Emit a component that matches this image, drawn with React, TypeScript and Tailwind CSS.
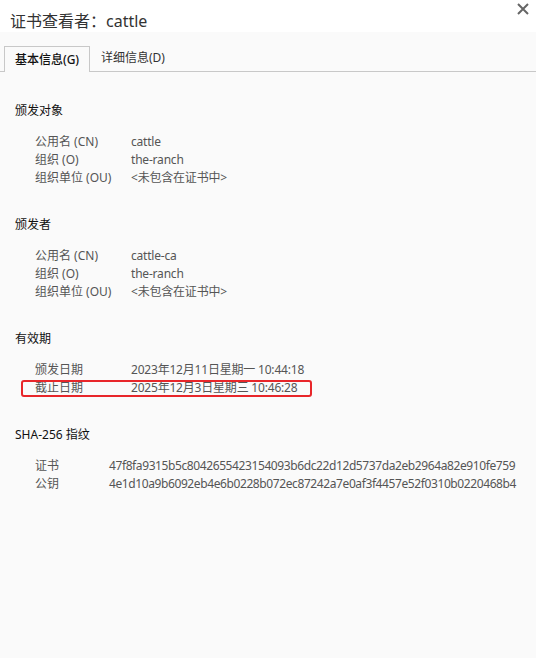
import React from "react"

const font = {
  fontFamily: '"Noto Sans", "Noto Sans CJK SC", sans-serif',
}

type Row = { label: string; value: string; marked?: boolean }

const sections: { title: string; labelWidth: string; hash?: boolean; rows: Row[] }[] = [
  {
    title: "颁发对象",
    labelWidth: "w-[96px]",
    rows: [
      { label: "公用名 (CN)", value: "cattle" },
      { label: "组织 (O)", value: "the-ranch" },
      { label: "组织单位 (OU)", value: "<未包含在证书中>" },
    ],
  },
  {
    title: "颁发者",
    labelWidth: "w-[96px]",
    rows: [
      { label: "公用名 (CN)", value: "cattle-ca" },
      { label: "组织 (O)", value: "the-ranch" },
      { label: "组织单位 (OU)", value: "<未包含在证书中>" },
    ],
  },
  {
    title: "有效期",
    labelWidth: "w-[96px]",
    rows: [
      { label: "颁发日期", value: "2023年12月11日星期一 10:44:18" },
      { label: "截止日期", value: "2025年12月3日星期三 10:46:28", marked: true },
    ],
  },
  {
    title: "SHA-256 指纹",
    labelWidth: "w-[74px]",
    hash: true,
    rows: [
      {
        label: "证书",
        value: "47f8fa9315b5c8042655423154093b6dc22d12d5737da2eb2964a82e910fe759",
      },
      {
        label: "公钥",
        value: "4e1d10a9b6092eb4e6b0228b072ec87242a7e0af3f4457e52f0310b0220468b4",
      },
    ],
  },
]

export default function App() {
  return (
    <div className="flex h-[658px] w-[536px] flex-col overflow-hidden bg-[#fafafa]" style={font}>
      {/* title bar */}
      <div className="relative h-[32px] bg-white px-[10px] pt-[10px]">
        <h1 className="text-[16px] leading-[22px] text-[#333]">证书查看者：cattle</h1>
        <svg className="absolute right-[7px] top-[3px]" width="12" height="12" viewBox="0 0 12 12">
          <path d="M1 1L11 11M11 1L1 11" stroke="#666" strokeWidth="2" />
        </svg>
      </div>

      {/* tabs */}
      <div className="flex h-[40px] items-end border-b border-[#c8c8c8] px-[4px]">
        <div className="-mb-px flex h-[26px] w-[86px] items-center justify-center border border-b-0 border-[#c8c8c8] bg-[#fafafa] text-[12px] font-medium text-[#111]">
          基本信息(G)
        </div>
        <div className="flex h-[26px] items-center px-[11px] text-[12px] text-[#333]">
          详细信息(D)
        </div>
      </div>

      {/* content */}
      <div className="flex flex-col gap-[29px] px-[15px] pt-[30px]">
        {sections.map((s) => (
          <section key={s.title}>
            <h2 className="text-[12px] leading-[18px] text-[#111]">{s.title}</h2>
            <div className="mt-[13px] pl-[20px]">
              {s.rows.map((r) => (
                <div key={r.label} className="relative flex text-[12px] leading-[18px] text-[#555]">
                  <span className={`${s.labelWidth} shrink-0`}>{r.label}</span>
                  <span
                    className={
                      s.hash
                        ? "whitespace-nowrap tracking-[-0.4px]"
                        : "whitespace-nowrap tracking-[-0.2px]"
                    }
                  >
                    {r.value}
                  </span>
                  {r.marked && (
                    <span className="absolute left-[-14px] top-[1px] h-[17px] w-[291px] rounded-[3px] border-2 border-[#e8262a]" />
                  )}
                </div>
              ))}
            </div>
          </section>
        ))}
      </div>
    </div>
  )
}
